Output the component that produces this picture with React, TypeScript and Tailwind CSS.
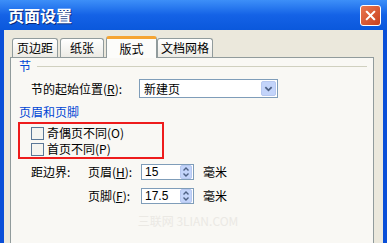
import React from 'react';

const cjk = { fontFamily: '"Noto Sans CJK SC", "Noto Sans", sans-serif' };

const tabs = [
    { label: '页边距', w: 'w-[46px]' },
    { label: '纸张', w: 'w-[44px]' },
    { label: '版式', w: 'w-[51px]', active: true },
    { label: '文档网格', w: 'w-[56px]' },
];

const Spinner = () => (
    <div className="flex flex-col w-[12px] h-[14px] mr-[1px] rounded-[2px] bg-[#c3d4fa] border border-[#b7c8f0]">
        <svg viewBox="0 0 10 6" className="w-[10px] h-[6px]">
            <path d="M2.5 4.5 L5 2 L7.5 4.5" fill="none" stroke="#4d6185" strokeWidth="1.4" />
        </svg>
        <svg viewBox="0 0 10 6" className="w-[10px] h-[6px]">
            <path d="M2.5 1.5 L5 4 L7.5 1.5" fill="none" stroke="#4d6185" strokeWidth="1.4" />
        </svg>
    </div>
);

const NumberField = ({ value }: { value: string }) => (
    <div className="flex items-center justify-between w-[53px] h-[16px] border border-[#7f9db9] bg-white">
        <span className="pl-[3px] text-[12px] leading-none text-black" style={{ fontFamily: '"Liberation Sans", sans-serif' }}>{value}</span>
        <Spinner />
    </div>
);

const CheckRow = ({ label }: { label: string }) => (
    <div className="flex items-center h-[18px]">
        <div className="w-[13px] h-[13px] border border-[#5a7797] bg-[#f4f4f0]" />
        <span className="ml-[3px] text-[12px] leading-none text-black">{label}</span>
    </div>
);

export default function App() {
    return (
        <div className="w-[387px] h-[243px] overflow-hidden flex flex-col bg-[#ece9d8]" style={cjk}>
            {/* Title bar */}
            <div className="h-[30px] flex items-center justify-between bg-gradient-to-b from-[#3d8ff8] via-[#1462e6] to-[#0a58dc] pl-[8px] pr-[6px]">
                <span className="text-white font-bold text-[16px] leading-none tracking-[0px] [text-shadow:1px_1px_0_#0a2a7a]">页面设置</span>
                <div className="w-[21px] h-[21px] rounded-[3px] border border-white bg-gradient-to-br from-[#e9764f] to-[#c9401c] flex items-center justify-center">
                    <svg viewBox="0 0 12 12" className="w-[11px] h-[11px]">
                        <path d="M2 2 L10 10 M10 2 L2 10" stroke="white" strokeWidth="2.2" strokeLinecap="square" />
                    </svg>
                </div>
            </div>

            {/* Window body */}
            <div className="flex-1 flex border-l-[4px] border-r-[4px] border-[#0a4fd8]">
                <div className="flex-1 flex flex-col bg-[#ebe8dc] pt-[5px] pl-[6px] pr-[9px]">
                    {/* Tabs */}
                    <div className="flex items-end h-[22px] pl-[2px]">
                        {tabs.map((t) =>
                            t.active ? (
                                <div key={t.label} className={`${t.w} h-[22px] -mb-[1px] z-10 flex items-center justify-center bg-[#fcfcfa] border-x border-[#919b9c] border-t-[3px] border-t-[#f5a433] rounded-t-[3px] text-[12px] text-black`}>
                                    {t.label}
                                </div>
                            ) : (
                                <div key={t.label} className={`${t.w} h-[19px] mr-[2px] flex items-center justify-center bg-gradient-to-b from-white to-[#ecebe5] border-x border-t border-[#919b9c] rounded-t-[3px] text-[12px] text-black`}>
                                    {t.label}
                                </div>
                            )
                        )}
                    </div>

                    {/* Tab panel */}
                    <div className="flex-1 border border-[#919b9c] border-b-0 bg-[#f9f8f4] pl-[8px] pr-[6px] flex flex-col">
                        <div className="flex items-center mt-[2px] h-[12px]">
                            <span className="text-[12px] leading-none text-[#0046d5]">节</span>
                            <div className="flex-1 ml-[6px] h-[1px] bg-[#d0d0bf]" />
                        </div>

                        <div className="flex items-center mt-[7px] h-[19px] pl-[12px]">
                            <span className="w-[108px] text-[12px] leading-none text-black">节的起始位置(<u>R</u>):</span>
                            <div className="flex items-center justify-between w-[139px] h-[19px] border border-[#7f9db9] bg-white">
                                <span className="pl-[4px] text-[12px] leading-none text-black">新建页</span>
                                <div className="w-[15px] h-[15px] mr-[1px] rounded-[2px] bg-[#c3d4fa] border border-[#b7c8f0] flex items-center justify-center">
                                    <svg viewBox="0 0 10 6" className="w-[9px] h-[6px]">
                                        <path d="M1.5 1 L5 4.5 L8.5 1" fill="none" stroke="#4d6185" strokeWidth="2" />
                                    </svg>
                                </div>
                            </div>
                        </div>

                        <div className="mt-[8px] h-[12px] flex items-center">
                            <span className="text-[12px] leading-none text-[#0046d5]">页眉和页脚</span>
                        </div>

                        <div className="mt-[4px] -ml-[1px] w-[146px] h-[37px] border-2 border-[#ee1c1c] pl-[11px] pt-[1px] flex flex-col">
                            <CheckRow label="奇偶页不同(O)" />
                            <CheckRow label="首页不同(P)" />
                        </div>

                        <div className="flex items-center mt-[5px] h-[16px] pl-[12px]">
                            <span className="w-[57px] text-[12px] leading-none text-black">距边界:</span>
                            <span className="w-[53px] text-[12px] leading-none text-black">页眉(<u>H</u>):</span>
                            <NumberField value="15" />
                            <span className="ml-[9px] text-[12px] leading-none text-black">毫米</span>
                        </div>

                        <div className="flex items-center mt-[8px] h-[16px] pl-[69px]">
                            <span className="w-[53px] text-[12px] leading-none text-black">页脚(<u>F</u>):</span>
                            <NumberField value="17.5" />
                            <span className="ml-[9px] text-[12px] leading-none text-black">毫米</span>
                        </div>

                        <div className="mt-[11px] flex justify-center pr-[10px]">
                            <span className="text-[12px] leading-none text-[#ebe9e4] tracking-[0px]">三联网 3LIAN.COM</span>
                        </div>
                    </div>
                </div>
            </div>
        </div>
    );
}
